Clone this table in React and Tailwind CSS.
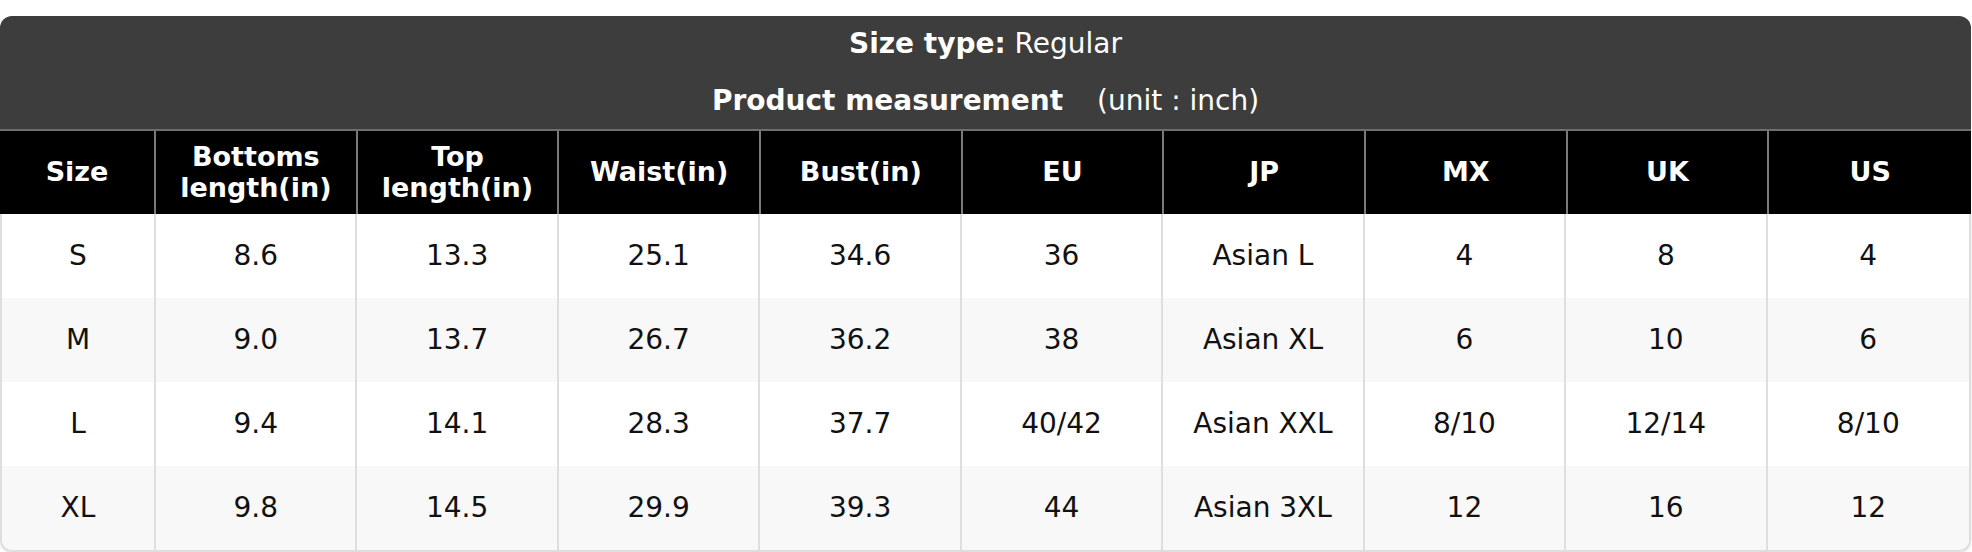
import React from 'react';

const columns = [
  ['Size'],
  ['Bottoms', 'length(in)'],
  ['Top', 'length(in)'],
  ['Waist(in)'],
  ['Bust(in)'],
  ['EU'],
  ['JP'],
  ['MX'],
  ['UK'],
  ['US'],
];

const rows = [
  ['S', '8.6', '13.3', '25.1', '34.6', '36', 'Asian L', '4', '8', '4'],
  ['M', '9.0', '13.7', '26.7', '36.2', '38', 'Asian XL', '6', '10', '6'],
  ['L', '9.4', '14.1', '28.3', '37.7', '40/42', 'Asian XXL', '8/10', '12/14', '8/10'],
  ['XL', '9.8', '14.5', '29.9', '39.3', '44', 'Asian 3XL', '12', '16', '12'],
];

const SizeChart = () => {
  return (
    <div className="pt-4 bg-white font-['DejaVu_Sans',sans-serif]">
      <div className="w-[1971px] rounded-t-[12px] overflow-hidden">
        {/* Title block */}
        <div className="bg-[#3d3d3d] text-white text-center text-[28px] leading-[33px]">
          <div className="pt-[11px]">
            <span className="font-bold">Size type:</span> Regular
          </div>
          <div className="pt-[24px] pb-[12px]">
            <span className="font-bold">Product measurement</span>
            <span className="ml-[34px]">(unit : inch)</span>
          </div>
        </div>

        {/* Column headers */}
        <div className="grid grid-cols-[156px_repeat(9,1fr)] bg-black border-t-2 border-[#6e6e6e]">
          {columns.map((lines, i) => (
            <div
              key={i}
              className={`h-[83px] pb-[2px] flex flex-col items-center justify-center text-white font-bold text-[27px] leading-[31px] ${
                i < columns.length - 1 ? 'border-r-2 border-[#7a7a7a]' : ''
              }`}
            >
              {lines.map((t) => (
                <span key={t}>{t}</span>
              ))}
            </div>
          ))}
        </div>
      </div>

      {/* Body */}
      <div className="w-[1971px] border-x-2 border-b-2 border-[#dedede] rounded-b-[12px] overflow-hidden shadow-sm">
        {rows.map((row, r) => (
          <div
            key={r}
            className={`grid grid-cols-[154px_repeat(9,1fr)] ${r % 2 === 1 ? 'bg-[#f8f8f8]' : 'bg-white'}`}
          >
            {row.map((cell, c) => (
              <div
                key={c}
                className={`h-[84px] flex items-center justify-center text-[28px] text-[#111] ${
                  c < row.length - 1 ? 'border-r-2 border-[#dedede]' : ''
                }`}
              >
                {cell}
              </div>
            ))}
          </div>
        ))}
      </div>
    </div>
  );
};

export default function App() {
  return <SizeChart />;
}
